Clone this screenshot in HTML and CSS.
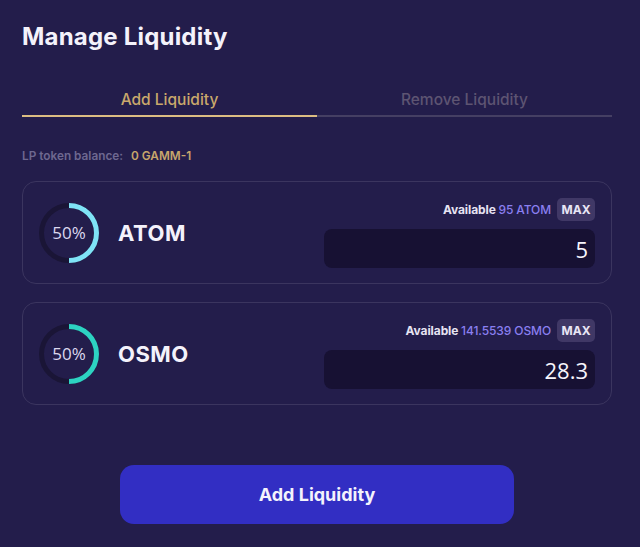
FILE: index.html
```html
<!DOCTYPE html>
<html lang="en">
<head>
<meta charset="utf-8">
<title>Manage Liquidity</title>
<link rel="stylesheet" href="styles.css">
</head>
<body>
<main class="panel">
  <h1 class="title">Manage Liquidity</h1>
  <div class="tabs">
    <div class="tab tab-active">Add Liquidity</div>
    <div class="tab">Remove Liquidity</div>
  </div>
  <div class="balance">
    <span class="balance-label">LP token balance:</span>
    <span class="balance-value">0 GAMM-1</span>
  </div>
  <section class="card">
    <div class="asset">
      <div class="ring">
        <svg width="60" height="60" viewBox="0 0 60 60">
          <circle cx="30" cy="30" r="27.5" fill="none" stroke="#1a1536" stroke-width="5"/>
          <path d="M30 2.5 A27.5 27.5 0 0 1 30 57.5" fill="none" stroke="#7fe3f6" stroke-width="5"/>
        </svg>
        <span class="ring-text">50%</span>
      </div>
      <span class="asset-name">ATOM</span>
    </div>
    <div class="amount">
      <div class="avail-row">
        <span class="avail">Available <span class="avail-value">95 ATOM</span></span>
        <span class="max">MAX</span>
      </div>
      <div class="input">5</div>
    </div>
  </section>
  <section class="card">
    <div class="asset">
      <div class="ring">
        <svg width="60" height="60" viewBox="0 0 60 60">
          <circle cx="30" cy="30" r="27.5" fill="none" stroke="#1a1536" stroke-width="5"/>
          <path d="M30 2.5 A27.5 27.5 0 0 1 30 57.5" fill="none" stroke="#2dd3c2" stroke-width="5"/>
        </svg>
        <span class="ring-text">50%</span>
      </div>
      <span class="asset-name">OSMO</span>
    </div>
    <div class="amount">
      <div class="avail-row">
        <span class="avail">Available <span class="avail-value">141.5539 OSMO</span></span>
        <span class="max">MAX</span>
      </div>
      <div class="input">28.3</div>
    </div>
  </section>
  <div class="actions">
    <button class="submit">Add Liquidity</button>
  </div>
</main>
</body>
</html>
```
FILE: styles.css
```css
html, body {
  margin: 0;
  padding: 0;
}
body {
  background: #231d4b;
  font-family: Inter, "Noto Sans", sans-serif;
  color: #f2f0fa;
  width: 640px;
  height: 547px;
  overflow: hidden;
}
.panel {
  width: 590px;
  padding: 22px 0 0 22px;
}
.title {
  margin: 0;
  font-size: 24px;
  font-weight: 700;
  line-height: 30px;
  letter-spacing: 0.2px;
  color: #f4f2fb;
}
.tabs {
  display: flex;
  margin-top: 38px;
}
.tab {
  flex: 1;
  text-align: center;
  font-size: 15.5px;
  font-weight: 500;
  line-height: 20px;
  padding-bottom: 5px;
  color: #5d5472;
  border-bottom: 2px solid #453f63;
}
.tab-active {
  color: #c9a86b;
  border-bottom-color: #dcbd82;
}
.balance {
  display: flex;
  gap: 8px;
  margin-top: 31px;
  font-size: 11.8px;
  font-weight: 600;
  line-height: 16px;
}
.balance-label {
  color: #6e6890;
}
.balance-value {
  color: #c7a66b;
}
.card {
  display: flex;
  align-items: center;
  justify-content: space-between;
  box-sizing: border-box;
  width: 590px;
  height: 103px;
  padding: 0 16px 0 16px;
  border: 1px solid #3b355f;
  border-radius: 14px;
}
.card + .card {
  margin-top: 18px;
}
.balance + .card {
  margin-top: 17px;
}
.asset {
  display: flex;
  align-items: center;
  gap: 19px;
}
.ring {
  position: relative;
  width: 60px;
  height: 60px;
}
.ring svg {
  display: block;
}
.ring-text {
  position: absolute;
  inset: 0;
  display: flex;
  align-items: center;
  justify-content: center;
  font-family: "Open Sans", sans-serif;
  font-size: 17px;
  color: #dcd8ef;
}
.asset-name {
  font-size: 22px;
  font-weight: 700;
  color: #f4f2fb;
  letter-spacing: 0.5px;
}
.amount {
  width: 271px;
  display: flex;
  flex-direction: column;
  align-items: flex-end;
  gap: 8px;
}
.avail-row {
  display: flex;
  align-items: center;
  gap: 6px;
}
.avail {
  font-size: 12px;
  font-weight: 700;
  color: #e6e3f2;
  letter-spacing: -0.1px;
}
.avail-value {
  color: #8a7ff0;
  font-weight: 500;
}
.max {
  display: flex;
  align-items: center;
  justify-content: center;
  width: 38px;
  height: 23px;
  background: #403866;
  border-radius: 5px;
  font-size: 12px;
  font-weight: 700;
  color: #e9e6f5;
}
.input {
  box-sizing: border-box;
  width: 271px;
  height: 39px;
  background: #171133;
  border-radius: 8px;
  padding: 0 7px;
  text-align: right;
  font-family: "Open Sans", sans-serif;
  font-size: 22px;
  line-height: 40px;
  color: #f6f5fc;
}
.actions {
  display: flex;
  justify-content: center;
  margin-top: 60px;
}
.submit {
  width: 394px;
  height: 59px;
  border: none;
  border-radius: 14px;
  background: #322ec3;
  color: #f4f3fc;
  font-family: Inter, sans-serif;
  font-size: 18px;
  font-weight: 700;
  cursor: pointer;
}
```
